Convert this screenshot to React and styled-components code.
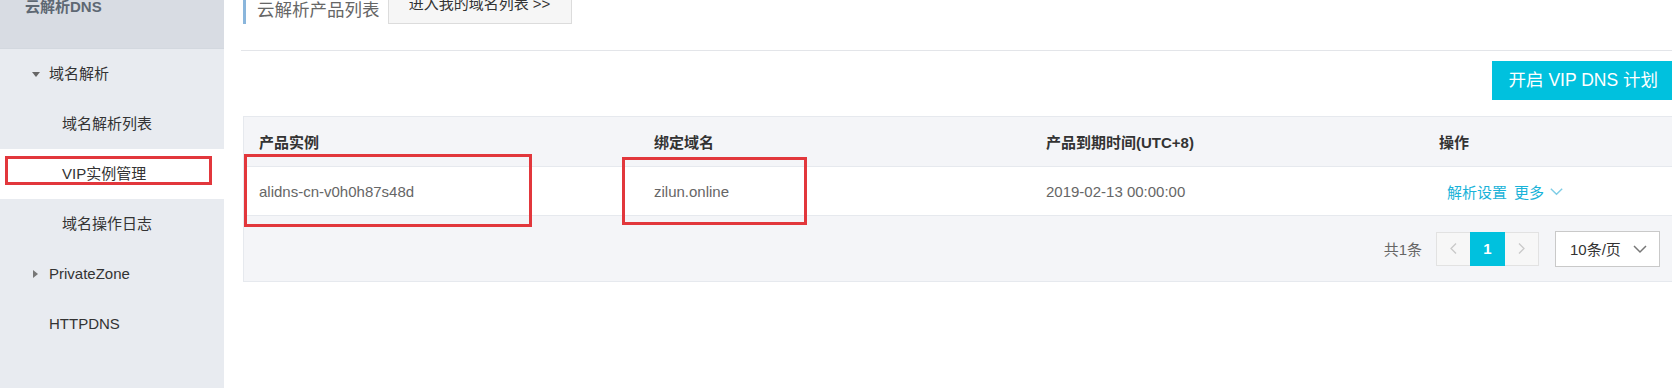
import React from "react";
import styled, { createGlobalStyle } from "styled-components";

const GlobalStyle = createGlobalStyle`
  html, body {
    margin: 0;
    padding: 0;
    overflow: hidden;
    background: #fff;
  }
  body {
    font-family: "Liberation Sans", Arial, "Noto Sans CJK SC", sans-serif;
    color: #333;
  }
  * {
    box-sizing: border-box;
  }
`;

const menu = [
  { label: "域名解析", level: 0, caret: "down" },
  { label: "域名解析列表", level: 1 },
  { label: "VIP实例管理", level: 1, active: true, marked: true },
  { label: "域名操作日志", level: 1 },
  { label: "PrivateZone", level: 0, caret: "right" },
  { label: "HTTPDNS", level: 0 },
];

const rows = [
  {
    instance: "alidns-cn-v0h0h87s48d",
    domain: "zilun.online",
    expire: "2019-02-13 00:00:00",
  },
];

const Chevron = ({ dir = "down", size = 12, color = "currentColor" }) => {
  const points = {
    down: "2,4 6,8 10,4",
    left: "8,2 4,6 8,10",
    right: "4,2 8,6 4,10",
  }[dir];
  return (
    <svg width={size} height={size} viewBox="0 0 12 12" fill="none">
      <polyline points={points} stroke={color} strokeWidth="1" />
    </svg>
  );
};

const App = () => {
  return (
    <>
      <GlobalStyle />
      <Page>
        <Sidebar>
          <SideHeader>云解析DNS</SideHeader>
          {menu.map((item, index) => (
            <NavItem key={index} $level={item.level} $active={item.active}>
              {item.caret && <Caret $dir={item.caret} />}
              {item.label}
              {item.marked && <SideMark />}
            </NavItem>
          ))}
        </Sidebar>

        <Main>
          <Content>
            <TitleRow>
              <Title>云解析产品列表</Title>
              <LinkButton>进入我的域名列表 &gt;&gt;</LinkButton>
            </TitleRow>

            <Toolbar>
              <PrimaryButton>开启 VIP DNS 计划</PrimaryButton>
            </Toolbar>

            <Table>
              <HeadRow>
                <HeadCell>产品实例</HeadCell>
                <HeadCell>绑定域名</HeadCell>
                <HeadCell>产品到期时间(UTC+8)</HeadCell>
                <HeadCell>操作</HeadCell>
              </HeadRow>
              {rows.map((row, index) => (
                <BodyRow key={index}>
                  <Cell>
                    {row.instance}
                    <Mark $left={0} $top={-13} $width={288} $height={73} />
                  </Cell>
                  <Cell>
                    {row.domain}
                    <Mark $left={-17} $top={-10} $width={185} $height={68} />
                  </Cell>
                  <Cell>{row.expire}</Cell>
                  <Cell>
                    <Actions>
                      <span>解析设置</span>
                      <More>
                        更多
                        <Chevron dir="down" size={17} color="#7fcde6" />
                      </More>
                    </Actions>
                  </Cell>
                </BodyRow>
              ))}
              <Footer>
                <Total>共1条</Total>
                <Pager>
                  <PageCell>
                    <Chevron dir="left" size={15} color="#c9c9c9" />
                  </PageCell>
                  <PageCell $active>1</PageCell>
                  <PageCell>
                    <Chevron dir="right" size={15} color="#c9c9c9" />
                  </PageCell>
                </Pager>
                <PageSize>
                  10条/页
                  <Chevron dir="down" size={18} color="#777" />
                </PageSize>
              </Footer>
            </Table>
          </Content>
        </Main>
      </Page>
    </>
  );
};

export default App;

const Page = styled.div`
  display: flex;
  height: 408px;
  margin-top: -20px;
`;

const Sidebar = styled.aside`
  width: 224px;
  flex-shrink: 0;
  display: flex;
  flex-direction: column;
  background: #e8ebf0;
`;

const SideHeader = styled.div`
  height: 69px;
  padding: 17px 0 0 25px;
  background: #d8dce3;
  border-bottom: 1px solid #d3d8df;
  font-size: 15px;
  font-weight: bold;
  line-height: 20px;
  color: #5e6873;
`;

const NavItem = styled.div`
  position: relative;
  height: 50px;
  display: flex;
  align-items: center;
  padding-left: ${(p) => (p.$level === 1 ? 62 : 49)}px;
  background: ${(p) => (p.$active ? "#fff" : "transparent")};
  font-size: 15px;
  line-height: 20px;
  color: #333;
`;

const Caret = styled.span`
  position: absolute;
  left: ${(p) => (p.$dir === "down" ? 32 : 33)}px;
  top: 50%;
  width: 0;
  height: 0;
  ${(p) =>
    p.$dir === "down"
      ? `
    margin-top: -2px;
    border-left: 4px solid transparent;
    border-right: 4px solid transparent;
    border-top: 5px solid #666;
  `
      : `
    margin-top: -4px;
    border-top: 4px solid transparent;
    border-bottom: 4px solid transparent;
    border-left: 5px solid #777;
  `}
`;

const SideMark = styled.span`
  position: absolute;
  left: 5px;
  top: 7px;
  width: 207px;
  height: 29px;
  border: 3px solid #e2373c;
`;

const Main = styled.main`
  flex: 1;
  min-width: 0;
  overflow: hidden;
  padding-left: 19px;
`;

const Content = styled.div`
  width: 1432px;
`;

const TitleRow = styled.div`
  display: flex;
  margin: 8px 0 0 -2px;
  height: 36px;
  box-sizing: content-box;
  padding: 0 0 26px 2px;
  border-bottom: 1px solid #e3e5e9;
`;

const Title = styled.h1`
  margin: 0;
  height: 36px;
  display: flex;
  align-items: flex-end;
  padding: 0 8px 2px 11px;
  border-left: 3px solid #8ab6dc;
  font-size: 17.5px;
  font-weight: normal;
  line-height: 24px;
  color: #666;
`;

const LinkButton = styled.button`
  width: 184px;
  height: 36px;
  padding: 0;
  border: 1px solid #dcdcdc;
  background: #f6f6f6;
  font-family: inherit;
  font-size: 15px;
  line-height: 30px;
  color: #333;
  display: flex;
  justify-content: center;
  align-items: flex-start;
`;

const Toolbar = styled.div`
  display: flex;
  justify-content: flex-end;
  margin-top: 10px;
`;

const PrimaryButton = styled.button`
  height: 39px;
  padding: 0 17px;
  border: none;
  background: #00c1de;
  color: #fff;
  font-family: inherit;
  font-size: 17.5px;
  line-height: 39px;
`;

const Table = styled.div`
  margin-top: 16px;
  border: 1px solid #e6e9ee;
  border-right: none;
`;

const HeadRow = styled.div`
  display: grid;
  grid-template-columns: 395px 392px 393px 1fr;
  height: 49px;
  background: #f4f5f8;
`;

const HeadCell = styled.div`
  display: flex;
  align-items: center;
  padding-left: 15px;
  font-size: 15px;
  font-weight: bold;
  color: #333;
`;

const BodyRow = styled.div`
  display: grid;
  grid-template-columns: 395px 392px 393px 1fr;
  height: 49px;
  background: #fff;
  border-top: 1px solid #e6e9ee;
`;

const Cell = styled.div`
  position: relative;
  display: flex;
  align-items: center;
  padding-left: 15px;
  font-size: 15px;
  color: #666;
`;

const Mark = styled.span`
  position: absolute;
  left: ${(p) => p.$left}px;
  top: ${(p) => p.$top}px;
  width: ${(p) => p.$width}px;
  height: ${(p) => p.$height}px;
  border: 3px solid #e2373c;
  z-index: 2;
`;

const Actions = styled.div`
  display: flex;
  align-items: center;
  gap: 7px;
  margin-left: 8px;
  color: #19b3d9;
`;

const More = styled.span`
  display: inline-flex;
  align-items: center;
  gap: 4px;
`;

const Footer = styled.div`
  display: flex;
  align-items: center;
  justify-content: flex-end;
  height: 66px;
  padding-right: 15px;
  background: #f4f5f8;
  border-top: 1px solid #e6e9ee;
`;

const Total = styled.span`
  font-size: 15px;
  color: #666;
  margin-right: 14px;
`;

const Pager = styled.div`
  display: flex;
  height: 34px;
  border: 1px solid #e2e2e2;
`;

const PageCell = styled.span`
  width: ${(p) => (p.$active ? 35 : 33)}px;
  display: flex;
  align-items: center;
  justify-content: center;
  background: ${(p) => (p.$active ? "#00c1de" : "#f7f7f7")};
  color: #fff;
  font-size: 15px;
  font-weight: bold;
  margin: ${(p) => (p.$active ? "-1px 0" : "0")};
`;

const PageSize = styled.div`
  margin-left: 16px;
  width: 105px;
  height: 36px;
  display: flex;
  align-items: center;
  justify-content: space-between;
  padding: 0 10px 0 14px;
  background: #fff;
  border: 1px solid #c9c9c9;
  font-size: 15px;
  color: #333;
`;
